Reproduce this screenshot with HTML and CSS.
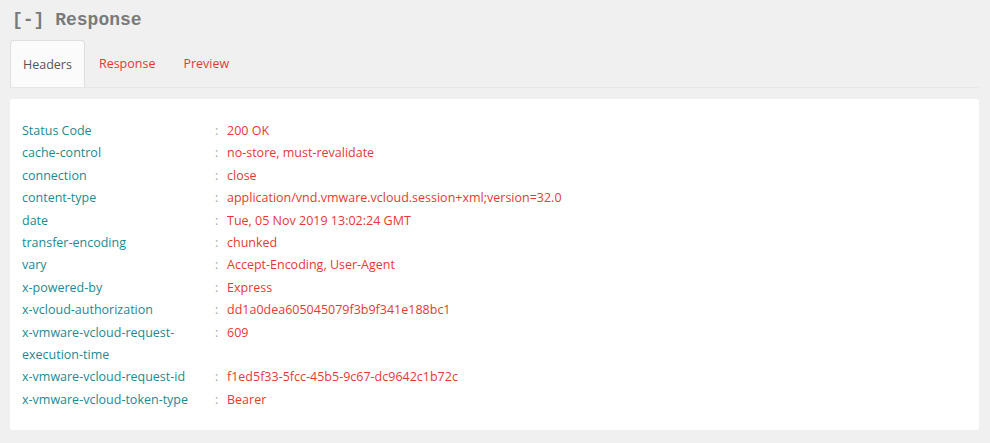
FILE: index.html
```html
<!DOCTYPE html>
<html>
<head>
<meta charset="utf-8">
<link rel="stylesheet" href="styles.css">
</head>
<body>
<div class="page">
  <h1 class="title">[-] Response</h1>
  <div class="tabs">
    <div class="tab active">Headers</div>
    <div class="tab">Response</div>
    <div class="tab">Preview</div>
  </div>
  <div class="card">
    <div class="grid">
      <div class="k">Status Code</div><div class="c">:</div><div class="v">200 OK</div>
      <div class="k">cache-control</div><div class="c">:</div><div class="v">no-store, must-revalidate</div>
      <div class="k">connection</div><div class="c">:</div><div class="v">close</div>
      <div class="k">content-type</div><div class="c">:</div><div class="v">application/vnd.vmware.vcloud.session+xml;version=32.0</div>
      <div class="k">date</div><div class="c">:</div><div class="v">Tue, 05 Nov 2019 13:02:24 GMT</div>
      <div class="k">transfer-encoding</div><div class="c">:</div><div class="v">chunked</div>
      <div class="k">vary</div><div class="c">:</div><div class="v">Accept-Encoding, User-Agent</div>
      <div class="k">x-powered-by</div><div class="c">:</div><div class="v">Express</div>
      <div class="k">x-vcloud-authorization</div><div class="c">:</div><div class="v">dd1a0dea605045079f3b9f341e188bc1</div>
      <div class="k">x-vmware-vcloud-request-execution-time</div><div class="c">:</div><div class="v">609</div>
      <div class="k">x-vmware-vcloud-request-id</div><div class="c">:</div><div class="v">f1ed5f33-5fcc-45b5-9c67-dc9642c1b72c</div>
      <div class="k">x-vmware-vcloud-token-type</div><div class="c">:</div><div class="v">Bearer</div>
    </div>
  </div>
</div>
</body>
</html>
```

FILE: styles.css
```css
html, body {
  margin: 0;
  padding: 0;
  background: #f0f0f0;
}
.page {
  padding: 8px 11px 0 10px;
  font-family: "Open Sans", "Noto Sans", sans-serif;
}
.title {
  margin: 0 0 0 2px;
  font-family: "Liberation Mono", monospace;
  font-size: 18px;
  font-weight: bold;
  color: #7a7a7a;
  line-height: 24px;
  height: 32px;
}
.tabs {
  display: flex;
  border-bottom: 1px solid #e6e6e6;
  height: 47px;
}
.tab {
  padding: 0 14px;
  line-height: 47px;
  font-size: 12.5px;
  color: #e53935;
}
.tab.active {
  background: #fbfbfb;
  border: 1px solid #dedede;
  border-bottom: none;
  border-radius: 4px 4px 0 0;
  color: #555;
  padding: 0 12px;
}
.card {
  margin-top: 11px;
  background: #fff;
  border-radius: 3px;
  padding: 21px 12px 19px 12px;
}
.grid {
  display: grid;
  grid-template-columns: 190px 15px 1fr;
  font-size: 12.5px;
  line-height: 22.4px;
}
.k {
  color: #1b8a91;
  padding-right: 6px;
}
.c {
  color: #aaa;
  padding-left: 3px;
}
.v {
  color: #e53935;
}
```
